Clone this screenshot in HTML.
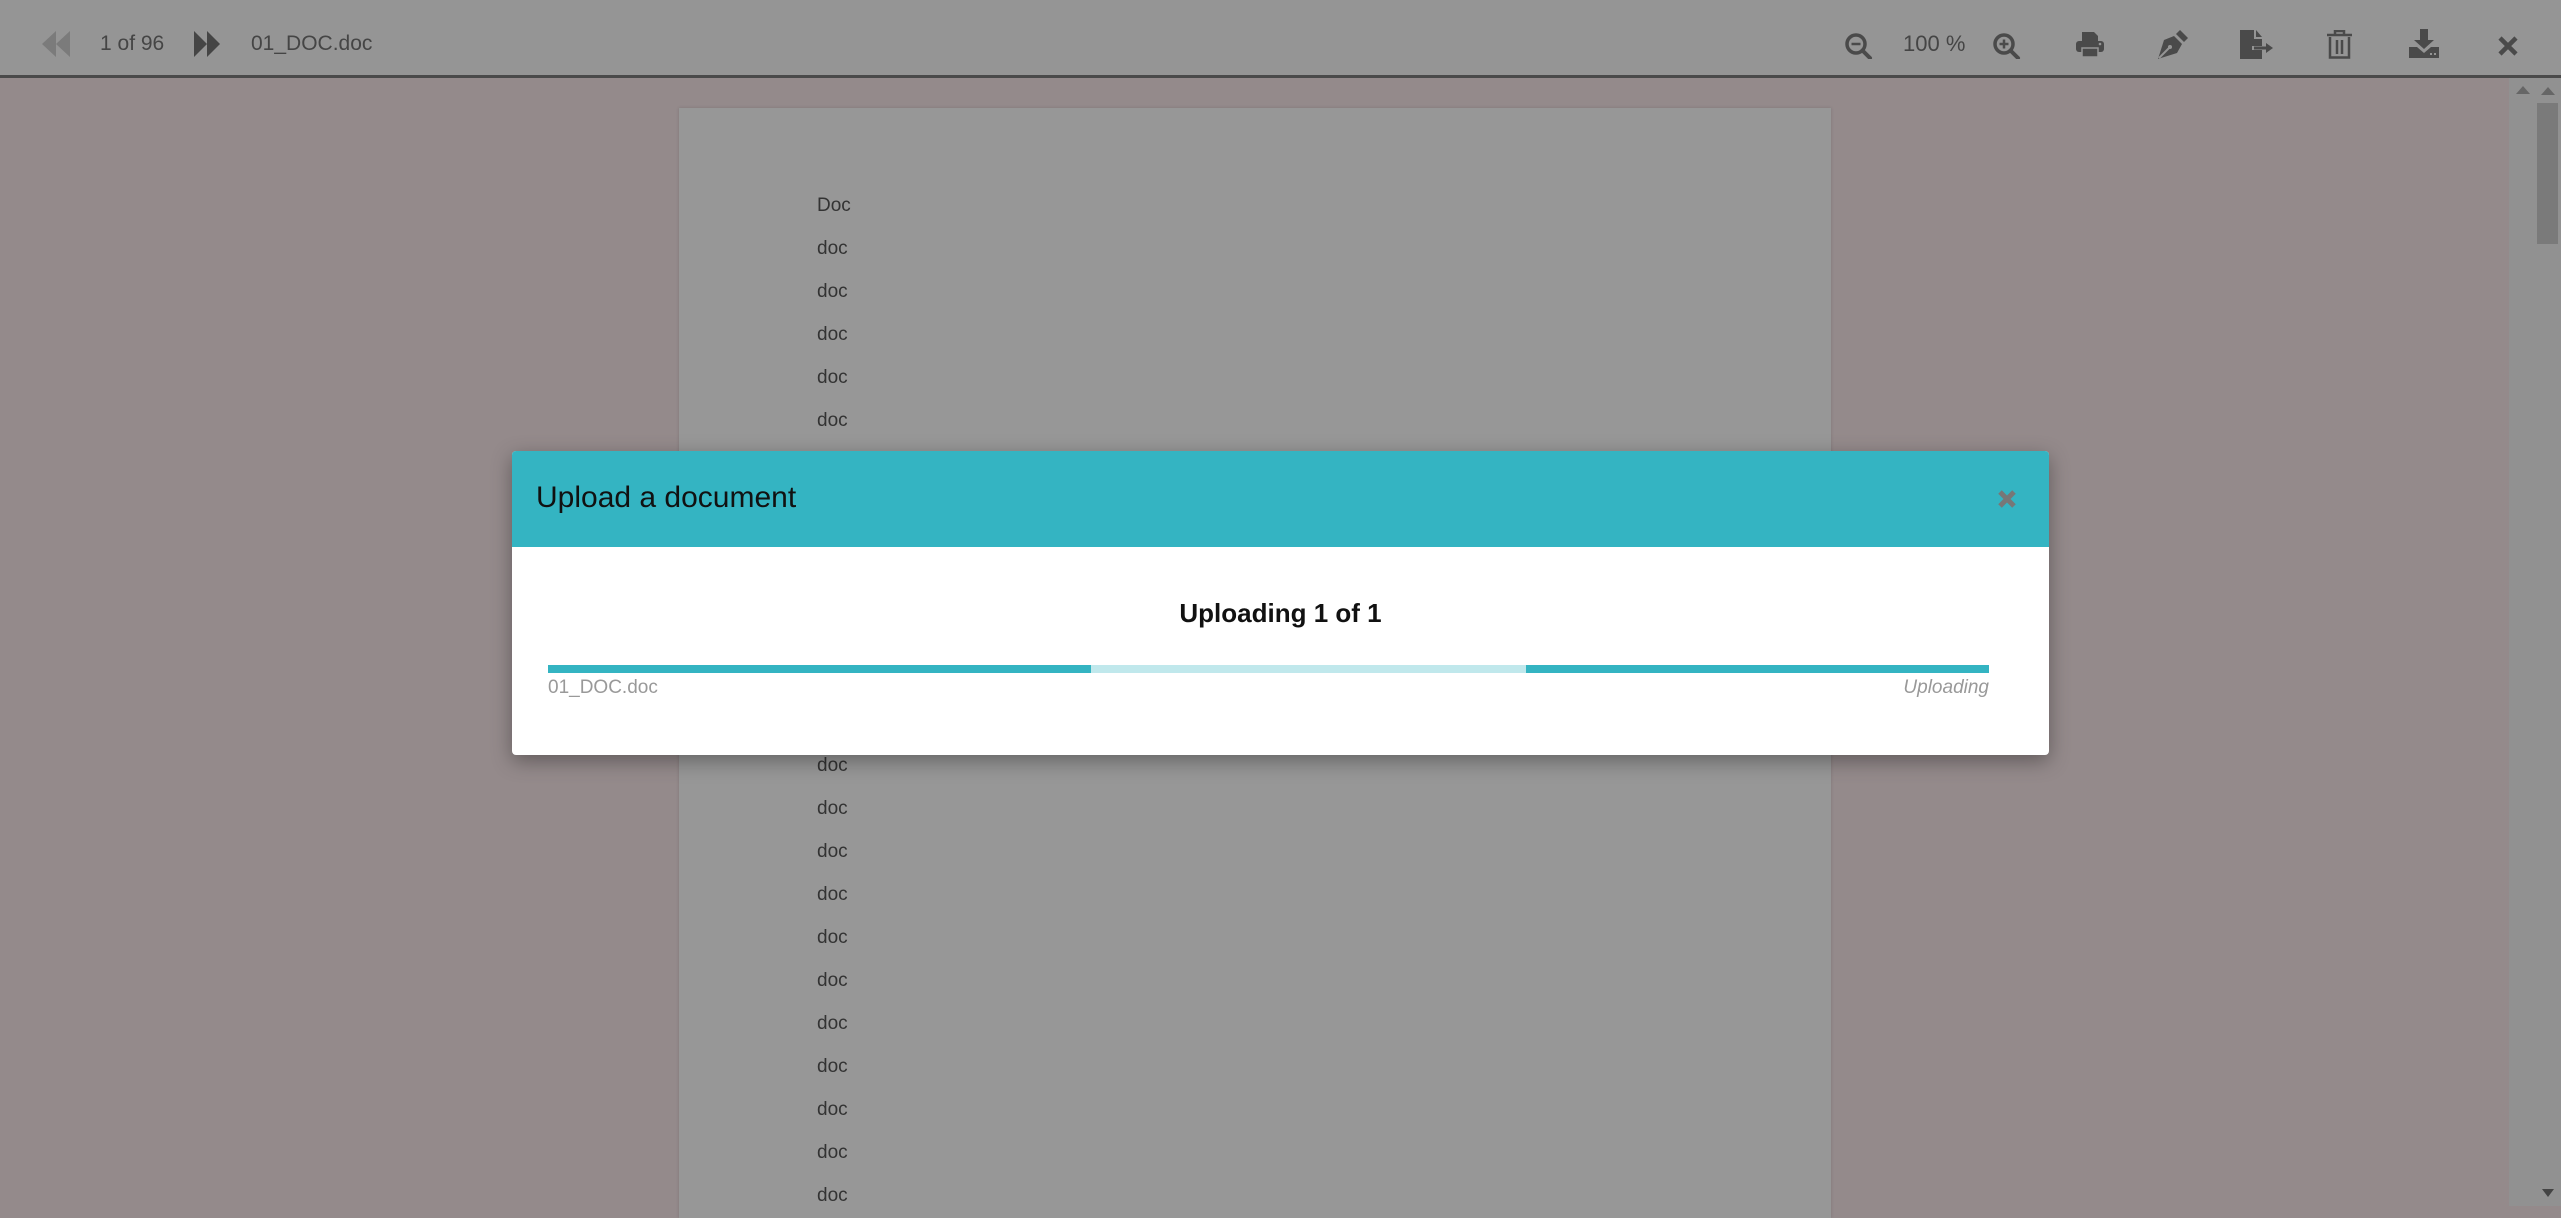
<!DOCTYPE html>
<html><head><meta charset="utf-8"><style>
*{margin:0;padding:0;box-sizing:border-box}
body{width:2561px;height:1206px;overflow:hidden;position:relative;background:#948a8b;font-family:"Liberation Sans",sans-serif}
.tb{position:absolute;left:0;top:0;width:2561px;background:#959595;border-bottom:3px solid #4a4a4a;height:78px}
.t{position:absolute;color:#454545;font-size:21px;top:32px}
.ic{position:absolute;top:30px}
.page{position:absolute;left:679px;top:108px;width:1152px;height:1110px;background:#979797;box-shadow:0 0 3px rgba(0,0,0,.15)}
.line{position:absolute;left:817px;font-size:19px;color:#333}
.sb{position:absolute;left:2509px;top:78px;width:52px;height:1128px;background:#919191}
.thumb{position:absolute;left:2537px;top:103px;width:21px;height:141px;background:#7a7a7a}
.dlg{position:absolute;left:512px;top:451px;width:1537px;height:304px;background:#fff;border-radius:4px;box-shadow:0 6px 20px rgba(0,0,0,.35);overflow:hidden}
.hd{height:96px;background:#34b4c2;position:relative}
.hd .ti{position:absolute;left:24px;top:30px;font-size:30px;color:#111}
.bar{position:absolute;top:214px;height:8px}
</style></head><body>
<div class="tb"></div>
<svg class="ic" style="left:42px;top:31px" width="28" height="26" viewBox="0 0 28 26"><path d="M14 0L0 13L14 26Z M28 0L14 13L28 26Z" fill="#7b7b7b"/></svg>
<div class="t" style="left:100px">1 of 96</div>
<svg class="ic" style="left:194px;top:31px" width="26" height="26" viewBox="0 0 26 26"><path d="M0 0L13 13L0 26Z M13 0L26 13L13 26Z" fill="#454545"/></svg>
<div class="t" style="left:251px">01_DOC.doc</div>
<svg class="ic" style="left:1845px;top:33px" width="28" height="26" viewBox="0 0 28 26"><circle cx="11" cy="11" r="9" fill="none" stroke="#4a4a4a" stroke-width="3.5"/><path d="M17.5 17.5L25 25" stroke="#4a4a4a" stroke-width="4" stroke-linecap="round"/><path d="M6.5 11H15.5" stroke="#4a4a4a" stroke-width="2.5"/></svg>
<div class="t" style="left:1903px;top:31px;font-size:22px">100 %</div>
<svg class="ic" style="left:1993px;top:33px" width="28" height="26" viewBox="0 0 28 26"><circle cx="11" cy="11" r="9" fill="none" stroke="#4a4a4a" stroke-width="3.5"/><path d="M17.5 17.5L25 25" stroke="#4a4a4a" stroke-width="4" stroke-linecap="round"/><path d="M6.5 11H15.5M11 6.5V15.5" stroke="#4a4a4a" stroke-width="2.5"/></svg>
<svg class="ic" style="left:2076px;top:32px" width="28" height="25" viewBox="0 0 28 25"><path d="M6 0H18L22 4V9H6Z" fill="#4a4a4a"/><rect x="0" y="9" width="28" height="11" rx="3" fill="#4a4a4a"/><rect x="6" y="16" width="16" height="9" fill="#4a4a4a" stroke="#959595" stroke-width="1.5"/><circle cx="24" cy="12" r="1.3" fill="#959595"/></svg>
<svg class="ic" style="left:2158px;top:30px" width="30" height="29" viewBox="0 0 30 29"><path d="M22 0L30 8L26 12L18 4Z" fill="#4a4a4a"/><path d="M16 6L24 14L19 23L0 29L6 10Z" fill="#4a4a4a"/><path d="M1 28L11 18" stroke="#959595" stroke-width="2"/><circle cx="12" cy="17" r="2" fill="#959595"/></svg>
<svg class="ic" style="left:2240px;top:30px" width="33" height="29" viewBox="0 0 33 29"><path d="M0 0H14V9H22V16H12V20H22V29H0Z M16 0L22 7H16Z" fill="#4a4a4a"/><path d="M14 18H27" stroke="#4a4a4a" stroke-width="3"/><path d="M26 13L33 18L26 23Z" fill="#4a4a4a"/></svg>
<svg class="ic" style="left:2327px;top:30px" width="25" height="29" viewBox="0 0 25 29"><path d="M0 5H25M8 5V1H17V5" stroke="#4a4a4a" stroke-width="2.5" fill="none"/><path d="M3 7V27.5H22V7" stroke="#4a4a4a" stroke-width="2.5" fill="none"/><path d="M10 10V24M15 10V24" stroke="#4a4a4a" stroke-width="2.5"/></svg>
<svg class="ic" style="left:2409px;top:29px" width="30" height="29" viewBox="0 0 30 29"><path d="M11 0H19V11H25L15 20L5 11H11Z" fill="#4a4a4a"/><path d="M0 18H8L15 24L22 18H30V29H0Z" fill="#4a4a4a"/><rect x="21" y="24" width="2" height="2" fill="#959595"/><rect x="25" y="24" width="2" height="2" fill="#959595"/></svg>
<svg class="ic" style="left:2498px;top:36px" width="20" height="20" viewBox="0 0 20 20"><path d="M2 2L18 18M18 2L2 18" stroke="#4a4a4a" stroke-width="4.5"/></svg>
<div class="page"></div>
<div class="line" style="top:195px">Doc</div>
<div class="line" style="top:238px">doc</div>
<div class="line" style="top:281px">doc</div>
<div class="line" style="top:324px">doc</div>
<div class="line" style="top:367px">doc</div>
<div class="line" style="top:410px">doc</div>
<div class="line" style="top:755px">doc</div>
<div class="line" style="top:798px">doc</div>
<div class="line" style="top:841px">doc</div>
<div class="line" style="top:884px">doc</div>
<div class="line" style="top:927px">doc</div>
<div class="line" style="top:970px">doc</div>
<div class="line" style="top:1013px">doc</div>
<div class="line" style="top:1056px">doc</div>
<div class="line" style="top:1099px">doc</div>
<div class="line" style="top:1142px">doc</div>
<div class="line" style="top:1185px">doc</div>
<div class="sb"></div>
<div class="thumb"></div>
<svg style="position:absolute;left:2516px;top:86px" width="14" height="8"><path d="M0 8L7 0L14 8Z" fill="#666"/></svg>
<svg style="position:absolute;left:2541px;top:87px" width="14" height="8"><path d="M0 8L7 0L14 8Z" fill="#666"/></svg>
<svg style="position:absolute;left:2542px;top:1189px" width="12" height="8"><path d="M0 0L6 8L12 0Z" fill="#444"/></svg>
<div class="dlg">
<div class="hd"><div class="ti">Upload a document</div>
<svg style="position:absolute;left:1485px;top:38px" width="20" height="20" viewBox="0 0 20 20"><path d="M3 3L17 17M17 3L3 17" stroke="#777" stroke-width="5"/></svg></div>
<div style="position:absolute;left:0;width:100%;top:147px;text-align:center;font-size:26px;font-weight:bold;color:#111">Uploading 1 of 1</div>
<div class="bar" style="left:36px;width:543px;background:#34b4c2"></div>
<div class="bar" style="left:579px;width:435px;background:#c0e8ec"></div>
<div class="bar" style="left:1014px;width:463px;background:#34b4c2"></div>
<div style="position:absolute;left:36px;top:226px;font-size:19px;color:#999">01_DOC.doc</div>
<div style="position:absolute;right:60px;top:226px;font-size:19px;color:#999;font-style:italic">Uploading</div>
</div>
</body></html>
